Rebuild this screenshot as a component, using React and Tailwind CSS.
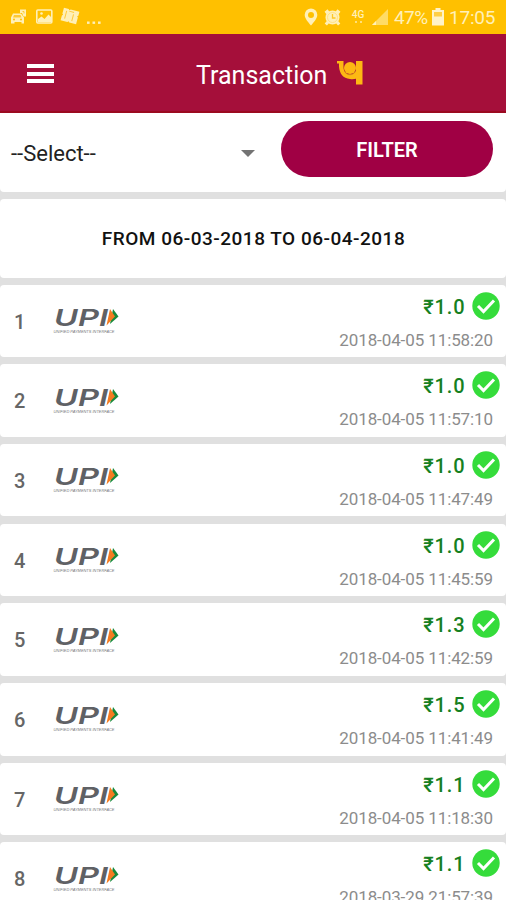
const transactions = [
  { id: 1, amount: "1.0", date: "2018-04-05 11:58:20" },
  { id: 2, amount: "1.0", date: "2018-04-05 11:57:10" },
  { id: 3, amount: "1.0", date: "2018-04-05 11:47:49" },
  { id: 4, amount: "1.0", date: "2018-04-05 11:45:59" },
  { id: 5, amount: "1.3", date: "2018-04-05 11:42:59" },
  { id: 6, amount: "1.5", date: "2018-04-05 11:41:49" },
  { id: 7, amount: "1.1", date: "2018-04-05 11:18:30" },
  { id: 8, amount: "1.1", date: "2018-03-29 21:57:39" },
];

const NotificationIcons = () => (
  <svg width="94" height="20" viewBox="0 0 94 20" fill="none">
    {/* car */}
    <g fill="#fff0b8">
      <path d="M3 6.500h8l3 4v6h-2.500v-1.500h-7v1.500H1v-6z" />
      <path d="M10 2.500h6v7h-2.500L12 6h-2z" />
    </g>
    <path d="M4 8h6.500l1 2.500H3z" fill="#ffc933" />
    <circle cx="4" cy="12.500" r="1" fill="#ffc107" />
    <circle cx="11" cy="12.500" r="1" fill="#ffc107" />
    <path d="M12.500 4.500h1.500v2" stroke="#ffc933" />
    {/* picture */}
    <rect x="26.800" y="3" width="15" height="13" rx="1" stroke="#fff0b8" strokeWidth="1.600" />
    <path d="M28 15v-3l3.500-2.500 3 2.500 4-4.500 3 3V15z" fill="#fff0b8" />
    <circle cx="31.500" cy="6.500" r="1.300" fill="#fff0b8" />
    {/* tickets */}
    <g transform="rotate(15 60 9)">
      <path d="M52 2.500h5l1 1 1-1h9v4l-1 1 1 1v7h-7l-1-1-1 1h-7v-5l1-1-1-1z" fill="#fff0b8" />
      <path d="M55.500 5v8M58 4.500h5M63 6.500v7" stroke="#ffc93c" />
    </g>
    <g fill="#fff0b8">
      <rect x="77" y="14.500" width="2.600" height="2.400" />
      <rect x="82.500" y="14.500" width="2.600" height="2.400" />
      <rect x="88" y="14.500" width="2.600" height="2.400" />
    </g>
  </svg>
);

const PinIcon = () => (
  <svg width="14" height="18" viewBox="0 0 14 18">
    <path
      fillRule="evenodd"
      d="M7 .5a6.300 6.300 0 0 1 6.300 6.300C13.300 10.500 10 14 7 17.500 4 14 .7 10.500.7 6.800A6.300 6.300 0 0 1 7 .5zM7 4a3 3 0 1 0 0 6 3 3 0 0 0 0-6z"
      fill="#fff0b8"
    />
  </svg>
);

const AlarmIcon = () => (
  <svg width="17" height="18" viewBox="0 0 17 18">
    <path d="M4.500 2.500 1.500 5M12.500 2.500l3 2.500M4 14l-2.200 2.500M13 14l2.200 2.500" stroke="#fff0b8" strokeWidth="3" />
    <circle cx="8.500" cy="9.500" r="7" fill="#fff0b8" />
    <circle cx="8.500" cy="9.500" r="5" fill="none" stroke="#ffde7d" strokeWidth="0.900" />
    <path d="M8.500 6v4h3" fill="none" stroke="#ffc726" strokeWidth="1.300" />
  </svg>
);

const SignalIcon = () => (
  <svg width="18" height="18" viewBox="0 0 18 18">
    <path d="M17 1v16H1z" fill="#ffdc66" />
    <path d="M5 13v4H1z" fill="#fff0b8" />
  </svg>
);

const BatteryIcon = () => (
  <svg width="12" height="18" viewBox="0 0 12 18">
    <path d="M3.500 0h5v2H12v15.500H0V2h3.500z" fill="#fff3c8" />
    <rect x="2" y="4" width="8" height="4.500" fill="#ffcf45" />
  </svg>
);

const StatusBar = () => (
  <div className="flex h-[34px] items-center bg-[#ffc000] pl-2.5 text-[#fff0b8]">
    <NotificationIcons />
    <div className="ml-[200px] flex items-center">
      <PinIcon />
      <div className="ml-[6px]">
        <AlarmIcon />
      </div>
      <div className="ml-[10px] flex h-[17px] w-[14px] flex-col items-center">
        <span className="text-[10px] leading-[11px] font-medium">4G</span>
        <span className="flex gap-[3px] pt-[1px]">
          <i className="size-[2px] bg-[#ffe07a]" />
          <i className="size-[2px] bg-[#ffe07a]" />
        </span>
      </div>
      <div className="ml-[6px]">
        <SignalIcon />
      </div>
      <span className="ml-[5px] w-[38px] pt-[2px] text-[19px] leading-6 tracking-[-0.6px]">
        47%
      </span>
      <BatteryIcon />
      <span className="ml-[5px] pt-[2px] text-[19px] leading-6 tracking-[-0.2px]">
        17:05
      </span>
    </div>
  </div>
);

const BankLogo = () => (
  <svg width="27" height="25" viewBox="0 0 27 25" fill="none">
    <path
      d="M0 1h6.500v5.500C6.500 12 9 14.500 13 14.500c3 0 5-1.500 6-4V1h6.500v23.500H19v-5.700c-2 .5-4 .7-6 .2C6 18.500 2.500 13.500 2 6.500V3.500H0z"
      fill="#fdb813"
    />
    <circle cx="13" cy="8" r="6" fill="#fdb813" />
    <path d="M7.500 11c2 5 9 5 11 0" stroke="#d98a18" strokeWidth="0.900" />
  </svg>
);

const Header = () => (
  <div className="flex h-[79px] items-center border-b-2 border-[#9b0a20] bg-[#a50f3a]">
    <button className="ml-[27px] flex w-[27px] flex-col gap-[3.500px] pt-[2px]">
      <span className="h-[4px] bg-white" />
      <span className="h-[4px] bg-white" />
      <span className="h-[4px] bg-white" />
    </button>
    <h1 className="ml-[142px] w-[141px] pt-[6px] text-[25px] leading-8 text-white">
      Transaction
    </h1>
    <BankLogo />
  </div>
);

const UpiLogo = () => (
  <svg width="70" height="36" viewBox="0 -5 70 36">
    <text
      x="1"
      y="20"
      fontFamily="Inter, sans-serif"
      fontStyle="italic"
      fontWeight="600"
      fontSize="23"
      fill="#5f6165"
      textLength="54"
      lengthAdjust="spacingAndGlyphs"
    >
      UPI
    </text>
    <path d="M60 3 65.500 10.500 57 18z" fill="#168a3c" />
    <path d="M57 3 62 10.500 53.500 19.500z" fill="#f47b20" />
    <text
      x="0.500"
      y="26.500"
      fontFamily="Liberation Sans, sans-serif"
      fontStyle="italic"
      fontSize="4"
      fill="#77787b"
      textLength="61"
      lengthAdjust="spacingAndGlyphs"
    >
      UNIFIED PAYMENTS INTERFACE
    </text>
  </svg>
);

const SuccessIcon = () => (
  <svg width="28" height="28" viewBox="0 0 28 28">
    <circle cx="14" cy="14" r="13.700" fill="#35dc3b" />
    <path d="M6 14l5.500 5.500L22 8.500" fill="none" stroke="#fff" strokeWidth="3" />
  </svg>
);

const TransactionRow = ({ item }) => (
  <div className="flex h-[72.600px] shrink-0 rounded-[4px] bg-white">
    <span className="w-[53px] pt-[25px] pl-[14px] text-[20px] leading-6 font-medium text-[#666]">
      {item.id}
    </span>
    <div className="pt-[16.500px]">
      <UpiLogo />
    </div>
    <div className="ml-auto flex flex-col items-end">
      <div className="flex h-[35px] items-end gap-[6px] pr-[6.500px]">
        <span className="text-[20px] leading-[26px] font-medium tracking-[0.900px] text-[#168021]">
          ₹{item.amount}
        </span>
        <SuccessIcon />
      </div>
      <span className="pt-[8px] pr-[13px] text-[17px] leading-6 tracking-[-0.1px] text-[#8c8c8c]">
        {item.date}
      </span>
    </div>
  </div>
);

const App = () => {
  return (
    <div className="h-[900px] w-[506px] overflow-hidden bg-[#e0e0e0] font-[Roboto,sans-serif]">
      <StatusBar />
      <Header />

      <div className="flex h-[79px] rounded-b-[4px] bg-white">
        <div className="flex h-20 w-[281px] items-center justify-between pr-[26px] pl-[11px]">
          <span className="text-[22px] text-[#222]">--Select--</span>
          <svg width="14" height="7" viewBox="0 0 14 7">
            <path d="M0 0h14L7 7z" fill="#737373" />
          </svg>
        </div>
        <button className="mt-2 h-[56px] w-[212px] rounded-[28px] bg-[#a00044] pt-[1px] text-[20px] font-semibold text-white">
          FILTER
        </button>
      </div>

      <div className="mt-[6.500px] flex h-[79px] items-center justify-center rounded-[4px] bg-white pt-[2px] pl-[1px]">
        <p className="text-[19px] font-medium tracking-[0.500px] text-[#111]">
          FROM 06-03-2018 TO 06-04-2018
        </p>
      </div>

      <div className="mt-[7px] flex flex-col gap-[7.100px]">
        {transactions.map((item) => (
          <TransactionRow key={item.id} item={item} />
        ))}
      </div>
    </div>
  );
};

export default App;
